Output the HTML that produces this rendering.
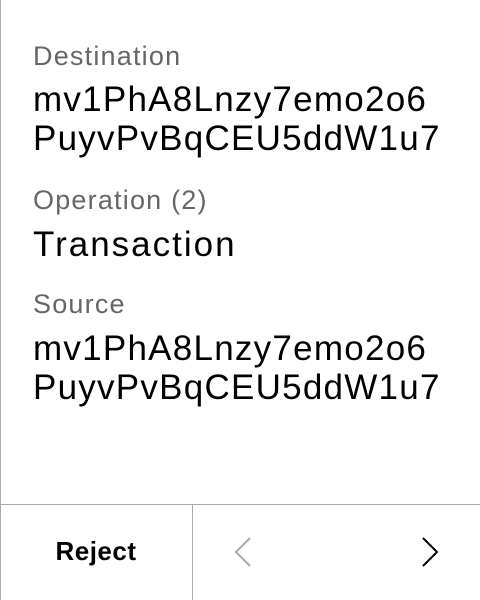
<!DOCTYPE html>
<html><head><style>
body{margin:0;width:480px;height:600px;background:#fff;font-family:"Liberation Sans",sans-serif;position:relative;overflow:hidden}
.l{position:absolute;left:0;top:0;width:1px;height:600px;background:#aaa}
.t{position:absolute;left:33px;white-space:nowrap}
.lab{font-size:27px;color:#666;letter-spacing:1.2px;line-height:31px}
.val{font-size:35px;color:#000;line-height:39px;letter-spacing:1.25px}
.h{position:absolute;left:0;top:504px;width:480px;height:1px;background:#aaa}
.v{position:absolute;left:192px;top:504px;width:1px;height:96px;background:#aaa}
</style></head><body>
<div class="l"></div>
<div class="t lab" style="top:41px">Destination</div>
<div class="t val" style="top:80px">mv1PhA8Lnzy7emo2o6<br>PuyvPvBqCEU5ddW1u7</div>
<div class="t lab" style="top:185px">Operation (2)</div>
<div class="t val" style="top:225px;letter-spacing:2px">Transaction</div>
<div class="t lab" style="top:289px">Source</div>
<div class="t val" style="top:329px">mv1PhA8Lnzy7emo2o6<br>PuyvPvBqCEU5ddW1u7</div>
<div class="h"></div><div class="v"></div>
<div style="position:absolute;left:0;top:536px;width:192px;text-align:center;font-size:26px;font-weight:bold;letter-spacing:0.5px">Reject</div>
<svg style="position:absolute;left:0;top:0" width="480" height="600">
<polyline points="250,538 236,552 250,566" fill="none" stroke="#aaa" stroke-width="2"/>
<polyline points="423,538 437,552 423,566" fill="none" stroke="#000" stroke-width="2"/>
</svg>
</body></html>
